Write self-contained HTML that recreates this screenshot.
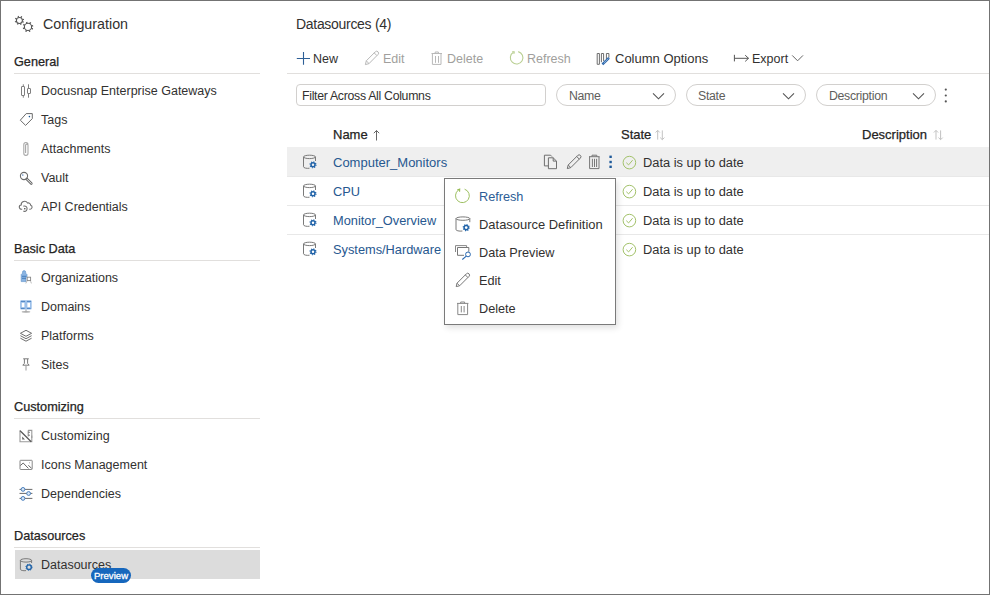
<!DOCTYPE html>
<html><head><meta charset="utf-8">
<style>
html,body{margin:0;padding:0;}
body{width:990px;height:595px;position:relative;overflow:hidden;background:#fff;font-family:"Liberation Sans",sans-serif;color:#323130;}
#frame{position:absolute;left:0;top:0;width:988px;height:593px;border:1px solid #737373;z-index:10;}
.t{position:absolute;white-space:nowrap;line-height:24px;font-size:12.5px;}
.hd{font-weight:normal;font-size:12.7px;color:#252423;-webkit-text-stroke:0.25px #252423;}
.sep{position:absolute;left:14px;width:246px;height:1px;background:#e1dfdd;}
svg{position:absolute;overflow:visible;}
.si{left:16px;}
.link{color:#27588f;font-size:12.8px;}
.dis{color:#a19f9d;}
.pill{position:absolute;top:84px;height:20px;width:118px;border:1px solid #d2d0ce;border-radius:11px;}
.rowline{position:absolute;left:287px;width:702px;height:1px;background:#e8e8e8;}
.st{font-size:12.85px;}
.mi{font-size:12.7px;}
</style></head><body>
<div id="frame"></div>

<!-- ============ Sidebar ============ -->
<svg style="left:12px;top:12px" width="26" height="24" viewBox="0 0 26 24" fill="none" stroke="#555">
  <circle cx="7.4" cy="8.4" r="3" stroke-width="1.05"/>
  <circle cx="7.4" cy="8.4" r="3.9" stroke-width="1.5" stroke-dasharray="1.1 1.963" stroke-dashoffset="-0.98"/>
  <circle cx="16" cy="14.9" r="3.6" stroke-width="1.1"/>
  <circle cx="16" cy="14.9" r="4.5" stroke-width="1.6" stroke-dasharray="1.3 2.234" stroke-dashoffset="-1.12"/>
</svg>
<div class="t" style="left:43px;top:12px;font-size:14.3px;">Configuration</div>

<div class="t hd" style="left:14px;top:50px;">General</div>
<div class="sep" style="top:73px"></div>

<!-- gateways -->
<svg class="si" style="top:80px" width="20" height="20" viewBox="0 0 20 20" fill="none" stroke="#808080" stroke-width="1">
  <rect x="5.5" y="6.5" width="3" height="9" rx="0.3"/>
  <path d="M7.3 4.3V6.5M7.3 15.5V17.7"/>
  <rect x="11.5" y="8.5" width="3" height="5" rx="0.3"/>
  <path d="M12.5 4.3V8.5M12.5 13.5V17.7"/>
</svg>
<div class="t" style="left:41px;top:79px;">Docusnap Enterprise Gateways</div>

<!-- tags -->
<svg class="si" style="top:109px" width="20" height="20" viewBox="0 0 20 20" fill="none">
  <path d="M10.2 4.6H16.3V9.6L9.6 16.4L4.3 11.2Z" stroke="#6b6b6b" stroke-width="1" stroke-linejoin="round"/>
  <circle cx="13.4" cy="7.6" r="0.8" fill="#1f5a96"/>
</svg>
<div class="t" style="left:41px;top:108px;">Tags</div>

<!-- attachments -->
<svg class="si" style="top:138px" width="20" height="20" viewBox="0 0 20 20" fill="none" stroke="#a8a8a8" stroke-width="1.1">
  <path d="M9.6 15V7.3a1.2 1.2 0 0 1 2.4 0V15.3a2.1 2.1 0 0 1 -4.2 0V6.6a2.1 2.1 0 0 1 4.2 0"/>
</svg>
<div class="t" style="left:41px;top:137px;">Attachments</div>

<!-- vault -->
<svg class="si" style="top:167px" width="20" height="20" viewBox="0 0 20 20" fill="none">
  <circle cx="8" cy="9" r="3.6" stroke="#6b6b6b" stroke-width="1.1"/>
  <path d="M10.8 12L15.3 16.5" stroke="#6b6b6b" stroke-width="2.6" stroke-linecap="round"/>
  <path d="M11.2 12.4L15.2 16.4" stroke="#fff" stroke-width="0.9" stroke-linecap="round"/>
  <rect x="6.1" y="7.4" width="1.3" height="1.3" fill="#5b8ac2"/>
</svg>
<div class="t" style="left:41px;top:166px;">Vault</div>

<!-- api credentials -->
<svg class="si" style="top:196px" width="20" height="20" viewBox="0 0 20 20" fill="none" stroke="#707070" stroke-width="1.1">
  <path d="M6.2 13.2H5.6a2.1 2.1 0 0 1 -0.4 -4.2a3.4 3.4 0 0 1 6.3 -2a2.5 2.5 0 0 1 3.2 2.3a2 2 0 0 1 -0.6 3.9h-0.8"/>
  <path d="M7.3 10.3a2.6 2.6 0 0 1 3.6 3.3a2.4 2.4 0 0 1 -3.6 1.4"/>
  <circle cx="8.8" cy="12.7" r="0.8" fill="#444" stroke="none"/>
</svg>
<div class="t" style="left:41px;top:195px;">API Credentials</div>

<div class="t hd" style="left:14px;top:237px;">Basic Data</div>
<div class="sep" style="top:260px"></div>

<!-- organizations -->
<svg class="si" style="top:267px" width="20" height="20" viewBox="0 0 20 20" fill="none">
  <path d="M5.2 14.6V7.5L6.5 6.2V5.2a1.6 1.6 0 0 1 3.2 0V6.2L11 7.5V10H10V14.6Z" fill="#8ab4e2" stroke="#5a8fc8" stroke-width="0.6"/>
  <path d="M6 9.3H10M6 11.3H10" stroke="#3d78b8" stroke-width="0.9"/>
  <rect x="11.2" y="10.2" width="3.4" height="3.4" stroke="#888" stroke-width="0.9"/>
  <path d="M11 14L9.8 16.4M14.6 14.2L15.4 16.4" stroke="#aaa" stroke-width="0.8"/>
</svg>
<div class="t" style="left:41px;top:266px;">Organizations</div>

<!-- domains -->
<svg class="si" style="top:296px" width="20" height="20" viewBox="0 0 20 20" fill="none">
  <rect x="4.1" y="4.3" width="11.6" height="9.3" rx="1" fill="#9cc0ea"/>
  <rect x="5.8" y="6.8" width="2.6" height="4.4" fill="#fff"/>
  <rect x="11.4" y="6.8" width="2.6" height="4.4" fill="#fff"/>
  <path d="M5 5.4H9M11 5.4H15M5 12.4H8.6M11 12.4H14.6" stroke="#4d83c2" stroke-width="1"/>
  <path d="M10 13.6V15" stroke="#999" stroke-width="1"/>
  <ellipse cx="10" cy="15.8" rx="4.3" ry="0.9" fill="#aaa"/>
</svg>
<div class="t" style="left:41px;top:295px;">Domains</div>

<!-- platforms -->
<svg class="si" style="top:325px" width="20" height="20" viewBox="0 0 20 20" fill="none" stroke="#6e6e6e" stroke-width="1" stroke-linejoin="round">
  <path d="M10 5.3L15.6 8.3L10 11.3L4.4 8.3Z"/>
  <path d="M4.4 10.7L10 13.7L15.6 10.7"/>
  <path d="M4.4 13.2L10 16.2L15.6 13.2"/>
</svg>
<div class="t" style="left:41px;top:324px;">Platforms</div>

<!-- sites -->
<svg class="si" style="top:354px" width="20" height="20" viewBox="0 0 20 20" fill="none" stroke="#7a7a7a" stroke-width="1">
  <path d="M7.2 4.8H12.8M8.4 5V9.4L6.8 11.2H13.2L11.6 9.4V5"/>
  <path d="M10 11.4V16.6" stroke="#aaa" stroke-width="1.2"/>
</svg>
<div class="t" style="left:41px;top:353px;">Sites</div>

<div class="t hd" style="left:14px;top:395px;">Customizing</div>
<div class="sep" style="top:418px"></div>

<!-- customizing -->
<svg class="si" style="top:425px" width="20" height="20" viewBox="0 0 20 20" fill="none">
  <path d="M4 5.2V16.8H15.8V10.5" stroke="#9a9a9a" stroke-width="1.1"/>
  <path d="M12.2 5.4H15.8V13" stroke="#9a9a9a" stroke-width="1.1"/>
  <path d="M4.1 5.8L15.2 16.8" stroke="#555" stroke-width="1.2"/>
  <path d="M6.2 11.6V14.5H9Z" fill="#666"/>
  <path d="M12.2 7.3H14M12.2 10.2H14" stroke="#777" stroke-width="0.9"/>
  <path d="M12.2 5.4V11.5" stroke="#777" stroke-width="0.9"/>
</svg>
<div class="t" style="left:41px;top:424px;">Customizing</div>

<!-- icons management -->
<svg class="si" style="top:454px" width="20" height="20" viewBox="0 0 20 20" fill="none" stroke="#7a7a7a" stroke-width="1">
  <rect x="4" y="6.3" width="12.2" height="9.2" rx="0.6" stroke="#888"/>
  <path d="M4.3 11.6L7.2 9L12.4 14.4M12.3 11.3L15.6 14.3" stroke="#666"/>
  <path d="M13.5 8.2V9.4" stroke="#bbb"/>
</svg>
<div class="t" style="left:41px;top:453px;">Icons Management</div>

<!-- dependencies -->
<svg class="si" style="top:483px" width="20" height="20" viewBox="0 0 20 20" fill="none">
  <path d="M3.5 6.4H16.4M3.5 10.4H16.4M3.5 15.4H16.4" stroke="#6b6b6b" stroke-width="1"/>
  <circle cx="7" cy="6.4" r="1.9" fill="#d6e6f7" stroke="#4a7fbd" stroke-width="1"/>
  <circle cx="12.6" cy="10.5" r="1.9" fill="#d6e6f7" stroke="#4a7fbd" stroke-width="1"/>
  <circle cx="7" cy="15.4" r="1.9" fill="#d6e6f7" stroke="#4a7fbd" stroke-width="1"/>
</svg>
<div class="t" style="left:41px;top:482px;">Dependencies</div>

<div class="t hd" style="left:14px;top:524px;">Datasources</div>
<div class="sep" style="top:547px"></div>
<div style="position:absolute;left:15px;top:550px;width:245px;height:29px;background:#dcdcdc;"></div>
<!-- datasources -->
<svg class="si" style="top:554px" width="20" height="20" viewBox="0 0 20 20" fill="none">
  <ellipse cx="10" cy="6.4" rx="5.6" ry="1.7" stroke="#7a7a7a" stroke-width="1"/>
  <path d="M4.4 6.4V15.3a4 1.4 0 0 0 5.6 1.3M15.6 6.4V9" stroke="#7a7a7a" stroke-width="1"/>
  <circle cx="13" cy="13.2" r="2.3" stroke="#1f62a8" stroke-width="1.4" fill="none"/>
  <circle cx="13" cy="13.2" r="3.1" stroke="#1f62a8" stroke-width="1" stroke-dasharray="1.1 1.33" fill="none"/>
</svg>
<div class="t" style="left:41px;top:553px;">Datasources</div>
<div style="position:absolute;left:91px;top:568px;width:40px;height:15px;border-radius:8px;background:#1667bd;color:#fff;font-size:9.6px;-webkit-text-stroke:0.3px #fff;line-height:15px;text-align:center;">Preview</div>

<!-- ============ Main ============ -->
<div class="t" style="left:296px;top:12px;font-size:14px;letter-spacing:-0.3px;">Datasources (4)</div>

<svg style="left:294px;top:48px" width="20" height="20" viewBox="0 0 20 20" fill="none" stroke="#2d5f96" stroke-width="1.1">
  <path d="M9.5 4V16.8M2.8 10.5H16"/>
</svg>
<div class="t" style="left:313px;top:47px;">New</div>
<svg style="left:362px;top:48px" width="20" height="20" viewBox="0 0 20 20" fill="none" stroke="#b8b8b8" stroke-width="1">
  <path d="M3.4 16.6L4.3 12.8L13.3 3.8a1.5 1.5 0 0 1 2.7 2.7L7 15.6Z M4.3 12.8L7 15.6M12.2 4.9L14.9 7.6"/>
</svg>
<div class="t dis" style="left:383px;top:47px;">Edit</div>
<svg style="left:426px;top:48px" width="20" height="20" viewBox="0 0 20 20" fill="none" stroke="#b8b8b8" stroke-width="1">
  <path d="M5.5 5.5H16M9.2 5.5V4H12.4V5.5M6.4 5.5V16.4H15V5.5M9.5 8V14.8M12.5 8V14.8"/>
</svg>
<div class="t dis" style="left:447px;top:47px;">Delete</div>
<svg style="left:506px;top:48px" width="20" height="20" viewBox="0 0 20 20" fill="none" stroke="#b9cf92" stroke-width="1.1">
  <path d="M12.2 3.6A6.3 6.3 0 1 1 7.4 4.3"/>
  <path d="M6.3 3.5L8.3 4L7.8 5.8"/>
</svg>
<div class="t dis" style="left:527px;top:47px;">Refresh</div>
<svg style="left:593px;top:48px" width="20" height="20" viewBox="0 0 20 20" fill="none">
  <path d="M4.2 16.3V5.5H6.4V16.3ZM8.4 14.2V5.5H10.6V13M13.4 11V5.5H15.9V9.6" stroke="#6e6e6e" stroke-width="1" stroke-linejoin="round"/>
  <path d="M9.4 16.4L16 9.9" stroke="#2a64a8" stroke-width="2.4"/>
  <path d="M10.6 15.2L15.4 10.5" stroke="#b9d5f2" stroke-width="0.7"/>
</svg>
<div class="t" style="left:615px;top:47px;font-size:13px;">Column Options</div>
<svg style="left:730px;top:48px" width="80" height="20" viewBox="0 0 80 20" fill="none" stroke="#555" stroke-width="1">
  <path d="M4.4 6.8V13.4M4.6 10.3H18.5M15.2 7.2L18.5 10.3L15.2 13.4"/>
  <path d="M62.2 7.4L67.6 12.8L73 7.4" stroke="#666"/>
</svg>
<div class="t" style="left:752px;top:47px;">Export</div>
<div style="position:absolute;left:287px;top:73px;width:702px;height:1px;background:#e1dfdd;"></div>

<!-- filter row -->
<div style="position:absolute;left:296px;top:84px;width:248px;height:20px;border:1px solid #d2d0ce;border-radius:4px;"></div>
<div class="t" style="left:302px;top:84px;font-size:12.3px;letter-spacing:-0.3px;">Filter Across All Columns</div>
<div class="pill" style="left:556px"></div>
<div class="t" style="left:569px;top:84px;font-size:12.3px;letter-spacing:-0.3px;color:#605e5c;">Name</div>
<div class="pill" style="left:686px"></div>
<div class="t" style="left:698px;top:84px;font-size:12.3px;letter-spacing:-0.3px;color:#605e5c;">State</div>
<div class="pill" style="left:816px"></div>
<div class="t" style="left:829px;top:84px;font-size:12.3px;letter-spacing:-0.3px;color:#605e5c;">Description</div>
<svg style="left:640px;top:84px" width="300" height="22" viewBox="0 0 300 22" fill="none" stroke="#555" stroke-width="1.1">
  <path d="M13 9.3L18.5 14.8L24 9.3"/>
  <path d="M143 9.3L148.5 14.8L154 9.3"/>
  <path d="M273 9.3L278.5 14.8L284 9.3"/>
</svg>
<svg style="left:940px;top:84px" width="12" height="22" viewBox="0 0 12 22" fill="#555">
  <circle cx="5.8" cy="5.6" r="1.1"/><circle cx="5.8" cy="11.5" r="1.1"/><circle cx="5.8" cy="17.4" r="1.1"/>
</svg>

<!-- table header -->
<div class="t hd" style="left:333px;top:123px;font-size:13px;">Name</div>
<svg style="left:370px;top:128px" width="12" height="14" viewBox="0 0 12 14" fill="none" stroke="#666" stroke-width="1">
  <path d="M6.5 2.5V12.5M3.8 5.2L6.5 2.5L9.2 5.2"/>
</svg>
<div class="t hd" style="left:621px;top:123px;font-size:13px;">State</div>
<div class="t hd" style="left:862px;top:123px;font-size:13px;">Description</div>
<svg style="left:650px;top:128px" width="300" height="14" viewBox="0 0 300 14" fill="none" stroke="#c2c2c2" stroke-width="1">
  <g id="srt"><path d="M7.7 11.6V2.4M5.6 4.5L7.7 2.4L9.8 4.5M12.3 2.4V11.7M10.2 9.6L12.3 11.7L14.4 9.6"/></g>
  <use href="#srt" x="278.3"/>
</svg>

<!-- rows -->
<div style="position:absolute;left:287px;top:147px;width:702px;height:29px;background:#efefef;"></div>
<div class="rowline" style="top:176px"></div>
<div class="rowline" style="top:205px"></div>
<div class="rowline" style="top:234px"></div>

<svg style="left:298px;top:152px" width="24" height="110" viewBox="0 0 24 110" fill="none">
  <g id="dsi">
  <ellipse cx="11.5" cy="4.9" rx="6" ry="1.7" stroke="#7a7a7a" stroke-width="1"/>
  <path d="M5.5 4.9V14.8a4.2 1.6 0 0 0 6 1.4M17.5 4.9V9" stroke="#7a7a7a" stroke-width="1"/>
  <circle cx="15" cy="12.8" r="2" stroke="#1f62a8" stroke-width="1.5"/>
  <circle cx="15" cy="12.8" r="3" stroke="#1f62a8" stroke-width="1.1" stroke-dasharray="1.05 1.31"/>
  </g>
  <use href="#dsi" y="29"/>
  <use href="#dsi" y="58"/>
  <use href="#dsi" y="87"/>
</svg>

<div class="t link" style="left:333px;top:151px;font-size:13px;">Computer_Monitors</div>
<div class="t link" style="left:333px;top:180px;">CPU</div>
<div class="t link" style="left:333px;top:209px;">Monitor_Overview</div>
<div class="t link" style="left:333px;top:238px;">Systems/Hardware</div>

<!-- row1 actions -->
<svg style="left:540px;top:152px" width="80" height="20" viewBox="0 0 80 20" fill="none" stroke="#6e6e6e" stroke-width="1">
  <path d="M8.4 13.9H4.4V3.2H10.6L12 4.6"/>
  <path d="M8.4 5.8H13.2L16.5 9.1V16.7H8.4Z M13.2 5.8V9.1H16.5"/>
  <path d="M27.3 16.6L28.2 13L37.8 3.4a1.5 1.5 0 0 1 2.6 2.6L30.8 15.6Z M28.2 13L30.8 15.6M36.7 4.5L39.3 7.1"/>
  <path d="M49 4.7H59.6M52 4.7V3.2H56.8V4.7M49.6 4.7V16.6H59V4.7M52.4 6.8V15M54.5 6.8V15M56.6 6.8V15" stroke="#777"/>
</svg>
<svg style="left:605px;top:152px" width="10" height="20" viewBox="0 0 10 20" fill="#1f5a9a">
  <rect x="4.4" y="3.6" width="2.4" height="2.4"/><rect x="4.4" y="8.8" width="2.4" height="2.4"/><rect x="4.4" y="13.6" width="2.4" height="2.4"/>
</svg>

<!-- state icons -->
<svg style="left:620px;top:152px" width="20" height="110" viewBox="0 0 20 110" fill="none" stroke="#a3c26b" stroke-width="1">
  <g id="chk"><circle cx="9.4" cy="10.6" r="6.3"/><path d="M6.3 10.7L8.6 12.9L12.6 8.2"/></g>
  <use href="#chk" y="29"/><use href="#chk" y="58"/><use href="#chk" y="87"/>
</svg>
<div class="t st" style="left:643px;top:151px;">Data is up to date</div>
<div class="t st" style="left:643px;top:180px;">Data is up to date</div>
<div class="t st" style="left:643px;top:209px;">Data is up to date</div>
<div class="t st" style="left:643px;top:238px;">Data is up to date</div>

<!-- ============ context menu ============ -->
<div style="position:absolute;left:444px;top:178px;width:170px;height:145px;border:1px solid #7a7a7a;background:#fff;box-shadow:2px 3px 6px rgba(0,0,0,0.12);"></div>
<svg style="left:450px;top:184px" width="25" height="135" viewBox="0 0 25 135" fill="none">
  <!-- refresh -->
  <path d="M14.6 5.2A6.9 6.9 0 1 1 8.6 6" stroke="#98bc58" stroke-width="0.95"/>
  <path d="M7.2 5.9L9.7 5.1L9.6 7.8" stroke="#98bc58" stroke-width="1.1"/>
  <!-- datasource def -->
  <ellipse cx="12.9" cy="34.6" rx="6.9" ry="1.7" stroke="#7a7a7a" stroke-width="1"/>
  <path d="M6 34.6V45.4a4.6 1.6 0 0 0 6.4 1.6M19.8 34.6V38.2" stroke="#7a7a7a" stroke-width="1"/>
  <circle cx="16.2" cy="43.6" r="2.1" stroke="#1f62a8" stroke-width="1.4"/>
  <circle cx="16.2" cy="43.6" r="3" stroke="#1f62a8" stroke-width="1.1" stroke-dasharray="1.05 1.31"/>
  <!-- data preview -->
  <path d="M5.5 68V61.6H16.6V63" stroke="#888" stroke-width="1"/>
  <path d="M7.5 63.5H18.8V67.8M14 71.3H7.5V63.5" stroke="#777" stroke-width="1"/>
  <circle cx="18" cy="70.4" r="2.4" stroke="#2a68b0" stroke-width="1"/>
  <path d="M16.3 72.2L12.3 75.5" stroke="#2a68b0" stroke-width="1.1"/>
  <!-- edit -->
  <path d="M6.2 102.6L7 99.2L16.4 89.8a1.5 1.5 0 0 1 2.6 2.6L9.6 101.8Z M7 99.2L9.6 101.8M15.3 90.9L17.9 93.5" stroke="#777" stroke-width="1"/>
  <!-- delete -->
  <path d="M7 119.4H18.4M10.7 119.4V118H14.6V119.4M7.8 119.4V130.6H17.6V119.4M11.3 122V128.4M14.1 122V128.4" stroke="#888" stroke-width="1"/>
</svg>
<div class="t mi" style="left:479px;top:185px;color:#2c5d96;">Refresh</div>
<div class="t mi" style="left:479px;top:213px;font-size:12.95px;">Datasource Definition</div>
<div class="t mi" style="left:479px;top:241px;">Data Preview</div>
<div class="t mi" style="left:479px;top:269px;">Edit</div>
<div class="t mi" style="left:479px;top:297px;">Delete</div>

</body></html>
